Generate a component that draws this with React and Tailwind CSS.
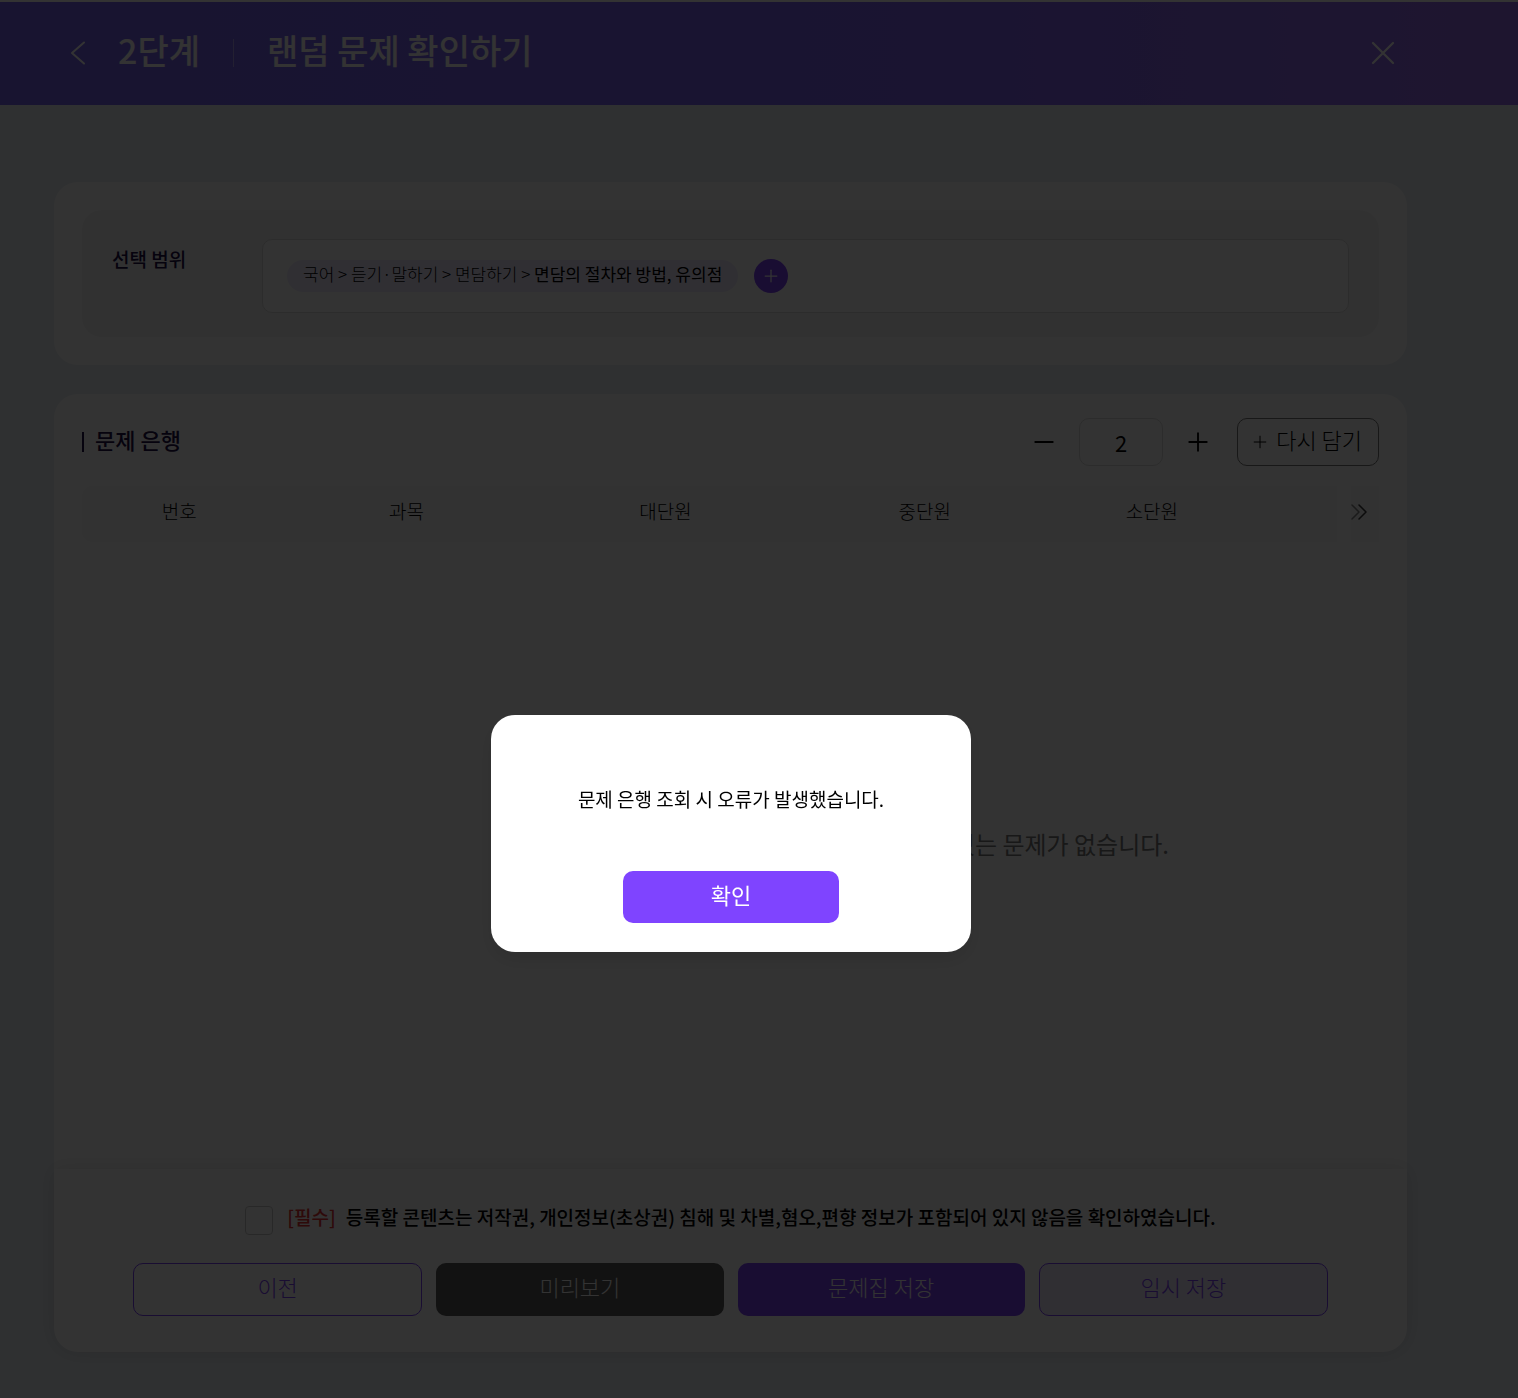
import { Minus, Plus } from 'lucide-react';

const COLUMNS = [
  { label: '번호', width: 'w-[15.5%]' },
  { label: '과목', width: 'w-[20.7%]' },
  { label: '대단원', width: 'w-[20.6%]' },
  { label: '중단원', width: 'w-[20.7%]' },
  { label: '소단원', width: 'w-[15.5%]' },
];

function BackIcon() {
  return (
    <svg viewBox="0 0 24 24" className="size-6" fill="none" stroke="currentColor" strokeWidth="2" strokeLinecap="round" strokeLinejoin="round">
      <path d="M18 1.5L6 12L18 22.5" />
    </svg>
  );
}

function CloseIcon() {
  return (
    <svg viewBox="0 0 24 24" className="size-6" fill="none" stroke="currentColor" strokeWidth="2.2" strokeLinecap="round">
      <path d="M2 2l20 20M22 2L2 22" />
    </svg>
  );
}

function ExpandIcon() {
  return (
    <svg viewBox="0 0 16 16" className="size-4" fill="none" stroke="currentColor" strokeWidth="1.5" strokeLinecap="round" strokeLinejoin="round">
      <path d="M1 1l7 7-7 7" opacity="0.6" />
      <path d="M8 1l7 7-7 7" />
    </svg>
  );
}

function Header() {
  return (
    <header className="border-t-2 border-white bg-gradient-to-r from-[#7864f0] via-[#8064f5] via-60% to-[#986ceb] text-white">
      <div className="flex h-[103px] items-center pr-[123px] pb-0.5 pl-[66px]">
        <button type="button" aria-label="뒤로">
          <BackIcon />
        </button>
        <h1 className="flex items-center pl-7 text-[34px] leading-10 font-medium">
          <span className="pb-1.5">2단계</span>
          <span className="mx-[33px] h-7 w-px bg-white/40" />
          <span className="pb-1.5">랜덤 문제 확인하기</span>
        </h1>
        <button type="button" aria-label="닫기" className="ml-auto">
          <CloseIcon />
        </button>
      </div>
    </header>
  );
}

function RangeCard() {
  return (
    <section className="rounded-3xl bg-white p-7">
      <div className="flex items-start rounded-[20px] bg-[#f5f5f5] px-[30px] pt-[29px] pb-6">
        <h2 className="w-[150px] shrink-0 pt-2 text-[19px] leading-6 font-medium text-[#1e0f46]">선택 범위</h2>
        <div className="flex min-h-[74px] grow items-center gap-4 rounded-[10px] border border-[#dcdcdc] bg-white px-6">
          <p className="rounded-full bg-[#f0ebff] px-4 pt-0.5 pb-1.5 text-[17px] leading-6 font-light">
            국어 &gt; 듣기·말하기 &gt; 면담하기 &gt; <strong className="font-normal">면담의 절차와 방법, 유의점</strong>
          </p>
          <button type="button" aria-label="범위 추가" className="flex size-[34px] items-center justify-center rounded-full bg-[#7d41fa] text-white">
            <Plus className="size-5" strokeWidth={1.5} />
          </button>
        </div>
      </div>
    </section>
  );
}

function BankCard() {
  return (
    <section className="flex grow flex-col rounded-t-3xl bg-white px-7 pt-6">
      <div className="flex items-center justify-between">
        <h2 className="flex items-center gap-[11px] text-[22px] leading-8 font-medium text-[#1e0f46]">
          <span className="h-5 w-0.5 bg-[#1e0f46]" />
          <span className="pb-1.5">문제 은행</span>
        </h2>
        <div className="flex items-center">
          <button type="button" aria-label="줄이기">
            <Minus className="size-[30px]" strokeWidth={1.5} />
          </button>
          <input
            type="text"
            aria-label="문제 수"
            defaultValue="2"
            className="mx-5 h-12 w-[84px] rounded-[10px] border border-[#dcdcdc] text-center text-[22px]"
          />
          <button type="button" aria-label="늘리기">
            <Plus className="size-[30px]" strokeWidth={1.5} />
          </button>
          <button type="button" className="ml-6 flex h-12 items-center gap-1.5 rounded-[10px] border border-[#787878] pr-4 pl-3 text-[22px] font-light">
            <Plus className="size-5" strokeWidth={1.2} />
            <span className="pb-1.5">다시 담기</span>
          </button>
        </div>
      </div>
      <div className="mt-5 flex gap-[14px]">
        <table className="h-14 w-full grow table-fixed rounded-l-[10px] bg-[#f8f8f8]">
          <thead>
            <tr className="text-[19px] leading-7">
              {COLUMNS.map((col) => (
                <th key={col.label} className={`${col.width} pb-1.5 font-light`}>{col.label}</th>
              ))}
              <td className="w-[7%]" />
            </tr>
          </thead>
        </table>
        <button type="button" aria-label="펼치기" className="flex h-14 w-7 shrink-0 items-center bg-[#f8f8f8] pb-1 text-[#3c3c3c]">
          <ExpandIcon />
        </button>
      </div>
      <p className="pt-[286px] pr-[210px] text-right text-2xl leading-8 text-[#787878]">있는 문제가 없습니다.</p>
    </section>
  );
}

function Footer() {
  const button = 'h-[53px] grow basis-0 rounded-[10px] pb-1.5 text-[22px] font-light';
  return (
    <footer className="rounded-b-3xl bg-white px-[79px] pt-9 pb-9 shadow-[0_0_20px_rgba(0,0,0,0.12)]">
      <label className="flex items-center justify-center text-[19px] leading-6 font-medium">
        <input type="checkbox" className="mr-[14px] h-[29px] w-7 appearance-none rounded border border-[#c8c8c8]" />
        <span className="mr-2.5 pb-1.5 text-[#e63232]">[필수]</span>
        <span className="pb-1.5">등록할 콘텐츠는 저작권, 개인정보(초상권) 침해 및 차별,혐오,편향 정보가 포함되어 있지 않음을 확인하였습니다.</span>
      </label>
      <div className="mt-7 flex gap-[14px]">
        <button type="button" className={`${button} border border-[#7d41fa] text-[#7d41fa]`}>이전</button>
        <button type="button" className={`${button} bg-[#5a5a5a] text-white`}>미리보기</button>
        <button type="button" className={`${button} bg-[#7d41fa] text-white`}>문제집 저장</button>
        <button type="button" className={`${button} border border-[#7d41fa] bg-[#f0ebff] text-[#7d41fa]`}>임시 저장</button>
      </div>
    </footer>
  );
}

function ErrorDialog() {
  return (
    <div className="fixed inset-0 flex items-center justify-center bg-black/80 pt-[269px] pr-14">
      <div
        role="alertdialog"
        aria-labelledby="error-message"
        className="flex w-[480px] flex-col items-center rounded-3xl bg-white px-8 pt-[70px] pb-[29px] shadow-[0_8px_20px_rgba(0,0,0,0.1)]"
      >
        <p id="error-message" className="text-[19px] leading-7">문제 은행 조회 시 오류가 발생했습니다.</p>
        <button type="button" className="mt-[58px] h-[52px] w-[216px] rounded-[10px] bg-[#7f44ff] pb-1.5 text-[22px] text-white">
          확인
        </button>
      </div>
    </div>
  );
}

export default function App() {
  return (
    <div className="flex min-h-screen flex-col bg-[#ebf0f5] font-['Noto_Sans_CJK_KR',sans-serif] text-black">
      <Header />
      <main className="flex grow flex-col gap-[29px] pt-[77px] pr-[111px] pb-[46px] pl-[54px]">
        <RangeCard />
        <div className="flex grow flex-col">
          <BankCard />
          <Footer />
        </div>
      </main>
      <ErrorDialog />
    </div>
  );
}
